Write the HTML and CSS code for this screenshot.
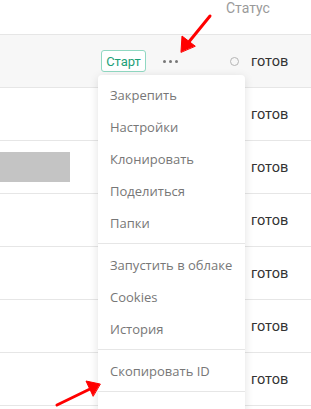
FILE: index.html
```html
<!DOCTYPE html>
<html lang="ru">
<head>
  <meta charset="UTF-8">
  <title>Профили</title>
  <link rel="stylesheet" href="styles.css">
</head>
<body>

  <!-- Table -->
  <div class="table">
    <div class="table-head">
      <div class="head-status">Статус</div>
    </div>

    <div class="row row-active">
      <div class="row-main"></div>
      <div class="row-actions">
        <button class="btn-start">Старт</button>
        <span class="dots"><i></i><i></i><i></i></span>
      </div>
      <div class="status"><span class="status-dot"></span>готов</div>
    </div>
    <div class="row">
      <div class="row-main"></div>
      <div class="status"><span class="status-dot"></span>готов</div>
    </div>
    <div class="row">
      <div class="row-main"><div class="placeholder"></div></div>
      <div class="status"><span class="status-dot"></span>готов</div>
    </div>
    <div class="row">
      <div class="row-main"></div>
      <div class="status"><span class="status-dot"></span>готов</div>
    </div>
    <div class="row">
      <div class="row-main"></div>
      <div class="status"><span class="status-dot"></span>готов</div>
    </div>
    <div class="row">
      <div class="row-main"></div>
      <div class="status"><span class="status-dot"></span>готов</div>
    </div>
    <div class="row">
      <div class="row-main"></div>
      <div class="status"><span class="status-dot"></span>готов</div>
    </div>
  </div>

  <!-- Context menu -->
  <div class="menu">
    <div class="menu-item">Закрепить</div>
    <div class="menu-item">Настройки</div>
    <div class="menu-item">Клонировать</div>
    <div class="menu-item">Поделиться</div>
    <div class="menu-item">Папки</div>
    <div class="menu-divider"></div>
    <div class="menu-item">Запустить в облаке</div>
    <div class="menu-item">Cookies</div>
    <div class="menu-item">История</div>
    <div class="menu-divider"></div>
    <div class="menu-item">Скопировать ID</div>
    <div class="menu-divider"></div>
    <div class="menu-item">Удалить</div>
  </div>

  <!-- Annotation arrows -->
  <svg class="arrows" width="311" height="409" viewBox="0 0 311 409">
    <g stroke="#f00" stroke-width="3" stroke-linecap="round" fill="#f00">
      <line x1="210" y1="16" x2="188" y2="43"/>
      <polygon points="181,52 182,36 195,46" stroke-width="1"/>
      <line x1="57" y1="405" x2="90" y2="389"/>
      <polygon points="100,384 86,381 93,396" stroke-width="1"/>
    </g>
  </svg>

</body>
</html>
```

FILE: styles.css
```css
* { margin: 0; padding: 0; box-sizing: border-box; }
body {
  font-family: Roboto, 'Liberation Sans', sans-serif;
  background: #fff;
  width: 311px;
  height: 409px;
  overflow: hidden;
  position: relative;
}
.table-head {
  height: 35px;
  border-bottom: 1px solid #e6e6e6;
  display: flex;
  justify-content: flex-end;
}
.head-status {
  width: 85px;
  font-size: 14px;
  line-height: 16px;
  color: #9a9a9a;
}
.row {
  height: 53px;
  border-bottom: 1px solid #e6e6e6;
  display: flex;
  align-items: center;
}
.row-active { background: #f7f7f7; }
.row-main { flex: 1; }
.placeholder {
  width: 70px;
  height: 30px;
  background: #c4c4c4;
}
.row-actions {
  display: flex;
  align-items: center;
  gap: 17px;
  margin-right: 48px;
}
.btn-start {
  font-family: Roboto, sans-serif;
  font-size: 13px;
  color: #1e9f78;
  background: #fff;
  border: 1px solid #90d8c2;
  border-radius: 3px;
  width: 45px;
  height: 22px;
}
.dots {
  display: flex;
  gap: 3px;
  width: 15px;
}
.dots i {
  width: 3px;
  height: 3px;
  border-radius: 50%;
  background: #777;
}
.status {
  width: 85px;
  display: flex;
  align-items: center;
  gap: 12px;
  padding-left: 4px;
  font-size: 14.5px;
  font-weight: 400;
  color: #333;
}
.status-dot {
  width: 9px;
  height: 9px;
  border: 1px solid #b5b5b5;
  border-radius: 50%;
}
.menu {
  position: absolute;
  left: 98px;
  top: 75px;
  width: 147px;
  padding-top: 4px;
  background: #fff;
  border-radius: 4px;
  box-shadow: 0 2px 10px rgba(0, 0, 0, 0.12);
  font-family: 'Open Sans', 'Noto Sans', sans-serif;
}
.menu-item {
  height: 32px;
  line-height: 32px;
  padding-left: 12px;
  font-size: 13px;
  color: #777;
  white-space: nowrap;
}
.menu-divider {
  height: 1px;
  margin: 4px 0 5px;
  background: #e6e6e6;
}
.arrows {
  position: absolute;
  left: 0;
  top: 0;
  pointer-events: none;
}
```
